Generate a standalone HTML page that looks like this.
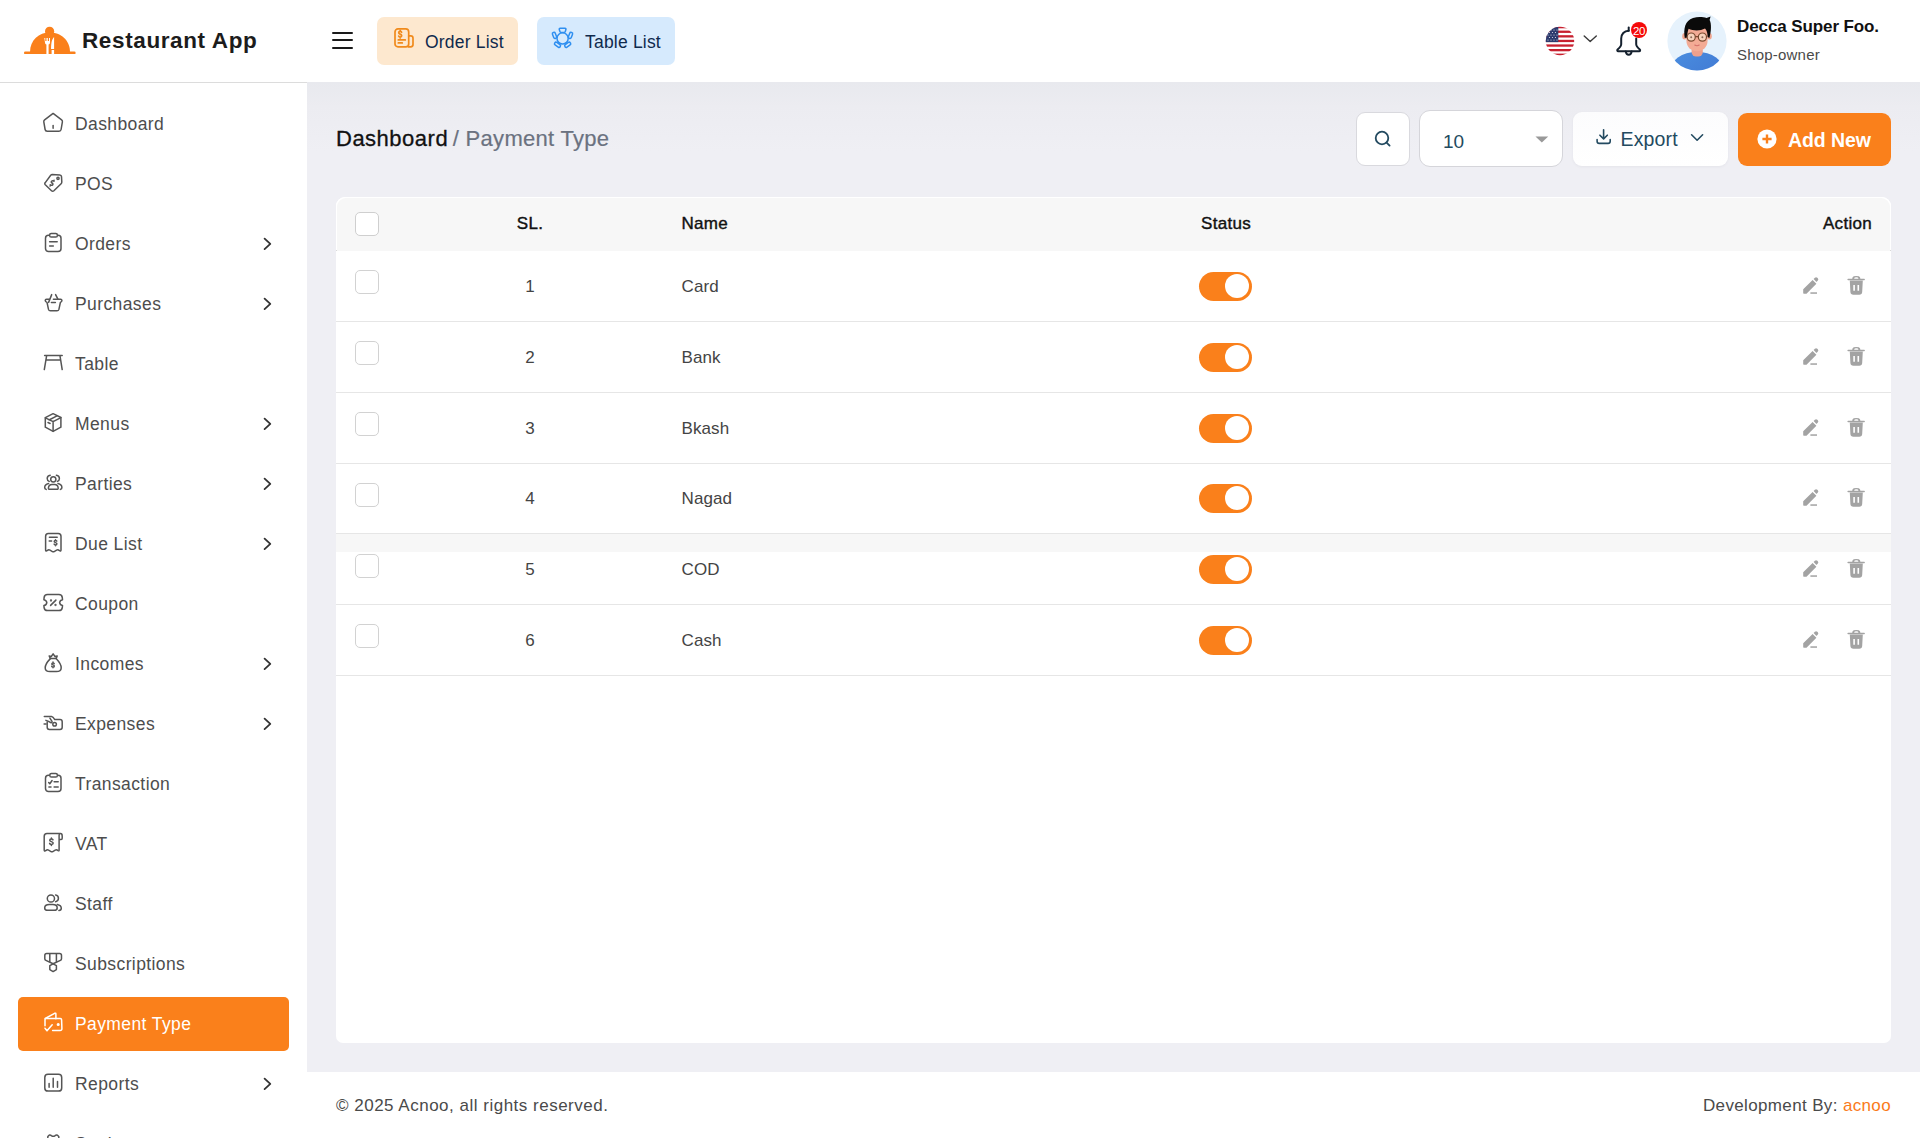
<!DOCTYPE html>
<html><head><meta charset="utf-8"><title>Payment Type</title>
<style>
*{box-sizing:border-box;margin:0;padding:0}
html,body{width:1920px;height:1138px;overflow:hidden;background:#fff;font-family:"Liberation Sans",sans-serif;color:#333}
.abs{position:absolute}
#header{position:absolute;left:0;top:0;width:1920px;height:82px;background:#fff}
#sidebar{position:absolute;left:0;top:82px;width:307px;height:1056px;background:#fff;border-top:1px solid #dcdcdc}
#main{position:absolute;left:307px;top:82px;width:1613px;height:990px;background:linear-gradient(#e8e9ee 0px,#ececf1 25px,#efeff4 70px,#efeff4 100%)}
#footer{position:absolute;left:307px;top:1072px;width:1613px;height:66px;background:#fff}
.nav{position:absolute;left:0;width:307px;height:54px}
.nav .ic{position:absolute;left:40.5px;top:14px;width:24px;height:24px}
.nav .tx{position:absolute;left:75px;top:0;line-height:54px;font-size:17.5px;letter-spacing:.4px;color:#4d4d4d;white-space:nowrap}
.nav .chev{position:absolute;left:262px;top:19px;width:12px;height:16px}
.nav.active{left:18px;width:271px;background:#fa801b;border-radius:5px}
.nav.active .ic{left:22.5px}
.nav.active .tx{left:57px;color:#fff}
svg.i{fill:none;stroke:#555;stroke-width:1.5;stroke-linecap:round;stroke-linejoin:round}
</style></head><body>
<div id="header">
<svg class="abs" style="left:0;top:0" width="100" height="82" viewBox="0 0 100 82">
 <circle cx="49.6" cy="31.3" r="4.6" fill="#fa801b"/>
 <path d="M30 52.3 C30 40 39 32.6 49.8 32.6 C60.6 32.6 70 40 70 52.3 Z" fill="#fa801b"/>
 <rect x="24" y="51.6" width="51.6" height="2.5" rx="1.2" fill="#fa801b"/>
 <path d="M44.3 37.9 h1 v3.2 h1.2 v-3.2 h1.3 v3.2 h1.2 v-3.2 h1 v4.6 c0 1.2 -0.8 1.9 -1.4 2.1 v9.7 h-2.2 v-9.7 c-0.6 -0.2 -1.4 -0.9 -1.4 -2.1 z" fill="#fff"/>
 <path d="M54.1 36.9 v12.1 h-3 c0 -5 0.4 -9.6 3 -12.1 z M51.6 50 h2.5 v4.1 h-2.5 z" fill="#fff"/>
</svg>
<div class="abs" style="left:82px;top:26px;font-size:22.5px;font-weight:700;letter-spacing:.62px;color:#1c1c1c;line-height:30px;white-space:nowrap">Restaurant App</div>
<div class="abs" style="left:332px;top:31.5px;width:21px;height:2px;background:#1a1a1a;border-radius:1px"></div>
<div class="abs" style="left:332px;top:39px;width:21px;height:2px;background:#1a1a1a;border-radius:1px"></div>
<div class="abs" style="left:332px;top:46.5px;width:21px;height:2px;background:#1a1a1a;border-radius:1px"></div>
<div class="abs" style="left:377px;top:17px;width:141px;height:48px;background:#fde8cf;border-radius:7px"></div>
<svg class="abs" style="left:392px;top:26px" width="24" height="24" viewBox="0 0 24 24" fill="none" stroke="#f08a1c" stroke-width="1.7" stroke-linecap="round" stroke-linejoin="round">
 <rect x="3" y="2.9" width="13.7" height="18" rx="3"/>
 <path d="M16.7 9.9 H18.7 Q21 9.9 21 12.2 V18.6 Q21 20.9 18.7 20.9 H16.7"/>
 <path d="M6.3 13.9 H13.3 M6.3 16.9 H10.3"/>
 <path d="M9.6 6.3 C9.4 5.7 8.9 5.4 8.2 5.4 C7.3 5.4 6.7 5.9 6.7 6.7 C6.7 8.3 9.7 7.9 9.7 9.7 C9.7 10.5 9 11 8.2 11 C7.4 11 6.9 10.6 6.7 10 M8.2 4.4 V5.4 M8.2 11 V12"/>
</svg>
<div class="abs" style="left:425px;top:30px;font-size:17.5px;letter-spacing:.2px;color:#0f2a4d;line-height:24px;white-space:nowrap">Order List</div>
<div class="abs" style="left:537px;top:17px;width:138px;height:48px;background:#d6eafd;border-radius:7px"></div>
<svg class="abs" style="left:550px;top:26px" width="25" height="24" viewBox="0 0 25 24" fill="none" stroke="#2f8ff0" stroke-width="1.5" stroke-linecap="round" stroke-linejoin="round">
 <circle cx="12.6" cy="12.4" r="5.6"/>
 <path d="M10.2 2.3 H15 Q16.3 2.3 15.9 3.6 L15.3 5.4 Q15 6.5 13.9 6.6 H11.3 Q10.2 6.5 9.9 5.4 L9.3 3.6 Q8.9 2.3 10.2 2.3 Z"/>
 <rect x="3" y="6.2" width="3" height="6.4" rx="1.4" transform="rotate(-20 4.5 9.4)"/>
 <rect x="19" y="6.2" width="3" height="6.4" rx="1.4" transform="rotate(20 20.5 9.4)"/>
 <rect x="4.2" y="17.3" width="6.6" height="3" rx="1.4" transform="rotate(35 7.5 18.8)"/>
 <rect x="14.4" y="17.3" width="6.6" height="3" rx="1.4" transform="rotate(-35 17.7 18.8)"/>
</svg>
<div class="abs" style="left:585px;top:30px;font-size:17.5px;letter-spacing:.2px;color:#0f2a4d;line-height:24px;white-space:nowrap">Table List</div>
<!-- flag -->
<svg class="abs" style="left:1545px;top:25.5px" width="30" height="30" viewBox="0 0 30 30">
 <defs><clipPath id="fc"><circle cx="15" cy="15" r="14.2"/></clipPath></defs>
 <g clip-path="url(#fc)">
  <rect width="30" height="30" fill="#fff"/>
  <g fill="#c8202f">
   <rect y="0" width="30" height="2.3"/><rect y="4.6" width="30" height="2.3"/><rect y="9.2" width="30" height="2.3"/><rect y="13.8" width="30" height="2.3"/><rect y="18.4" width="30" height="2.3"/><rect y="23" width="30" height="2.3"/><rect y="27.6" width="30" height="2.4"/>
  </g>
  <rect width="13.3" height="16.1" fill="#2c3b6e"/>
  <g fill="#fff" opacity=".85">
   <circle cx="3" cy="4" r=".6"/><circle cx="6" cy="4" r=".6"/><circle cx="9" cy="4" r=".6"/><circle cx="12" cy="4" r=".6"/>
   <circle cx="4.5" cy="6.5" r=".6"/><circle cx="7.5" cy="6.5" r=".6"/><circle cx="10.5" cy="6.5" r=".6"/>
   <circle cx="3" cy="9" r=".6"/><circle cx="6" cy="9" r=".6"/><circle cx="9" cy="9" r=".6"/><circle cx="12" cy="9" r=".6"/>
   <circle cx="4.5" cy="11.5" r=".6"/><circle cx="7.5" cy="11.5" r=".6"/><circle cx="10.5" cy="11.5" r=".6"/>
   <circle cx="3" cy="14" r=".6"/><circle cx="6" cy="14" r=".6"/><circle cx="9" cy="14" r=".6"/><circle cx="12" cy="14" r=".6"/>
  </g>
 </g>
</svg>
<svg class="abs" style="left:1582px;top:33px" width="16" height="10" viewBox="0 0 16 10" fill="none" stroke="#3a3a3a" stroke-width="1.4" stroke-linecap="round" stroke-linejoin="round"><path d="M2.2 3 L8.2 8.6 L14.3 3"/></svg>
<!-- bell -->
<svg class="abs" style="left:1614px;top:24px" width="30" height="34" viewBox="0 0 30 34" fill="none" stroke="#14202e" stroke-width="2" stroke-linecap="round" stroke-linejoin="round">
 <path d="M14.7 3.5 v3.3"/>
 <path d="M14.7 6.8 c-4.5 0 -7.5 3.3 -7.5 7.8 v5.7 c0 1.6 -1 3 -3.6 5.3 c-0.7 0.6 -0.3 1.6 0.6 1.6 h21 c0.9 0 1.3 -1 0.6 -1.6 c-2.6 -2.3 -3.6 -3.7 -3.6 -5.3 v-5.7"/>
 <path d="M11.8 27.6 c0.3 2 1.4 3.2 2.9 3.2 s2.6 -1.2 2.9 -3.2"/>
</svg>
<div class="abs" style="left:1631px;top:22px;width:16px;height:16px;border-radius:50%;background:#f50a0a"></div>
<div class="abs" style="left:1630px;top:22.5px;width:18px;height:16px;font-size:11.5px;line-height:16px;color:#fff;text-align:center;letter-spacing:-.4px">20</div>
<!-- avatar -->
<svg class="abs" style="left:1667px;top:11px" width="60" height="60" viewBox="0 0 60 60">
 <defs><clipPath id="av"><circle cx="30" cy="30" r="29.6"/></clipPath>
 <linearGradient id="shirt" x1="0" y1="0" x2="1" y2="1"><stop offset="0" stop-color="#4a8ee0"/><stop offset="1" stop-color="#3f73cf"/></linearGradient></defs>
 <g clip-path="url(#av)">
  <rect width="60" height="60" fill="#e6f2fc"/>
  <ellipse cx="30" cy="60.5" rx="27" ry="19.8" fill="url(#shirt)"/>
  <rect x="24.6" y="35" width="11.2" height="10.6" rx="4.5" fill="#eea08c"/>
  <ellipse cx="17.6" cy="25.3" rx="2.4" ry="3.2" fill="#f0a690"/>
  <ellipse cx="42.4" cy="25.3" rx="2.4" ry="3.2" fill="#f0a690"/>
  <path d="M19.4 22 C19.4 14 23.5 11.5 30 11.5 C36.5 11.5 40.6 14 40.6 22 V29.5 C40.6 36.3 35.8 40.2 30 40.2 C24.2 40.2 19.4 36.3 19.4 29.5 Z" fill="#f3ab95"/>
  <path d="M17.8 27 C16.2 18 18 9.5 26 7 C31.5 5.4 36.5 6.2 39.5 7 L43.6 5.6 L42.6 9 C44.6 12.5 44.4 20 42.4 27 L40.6 26 C40.6 22 39.8 19.4 38 17.6 C33.2 20.2 26 20 21.6 17.8 C20.6 20.4 20.2 23.4 20.2 26.5 Z" fill="#0a0a0a"/>
  <circle cx="24.2" cy="26.1" r="4.1" fill="#f8dcc6" fill-opacity=".8" stroke="#7b4a30" stroke-width="1.2"/>
  <circle cx="35.4" cy="26.1" r="4.1" fill="#f8dcc6" fill-opacity=".8" stroke="#7b4a30" stroke-width="1.2"/>
  <path d="M28.3 25.6 h2.9" stroke="#7b4a30" stroke-width="1.1"/>
  <circle cx="24.2" cy="26.3" r="1" fill="#8a6a5a"/><circle cx="35.4" cy="26.3" r="1" fill="#8a6a5a"/>
  <path d="M27.8 34 q2.2 1.4 4.4 0" stroke="#d4706a" stroke-width="1.1" fill="none" stroke-linecap="round"/>
 </g>
</svg>
<div class="abs" style="left:1737px;top:16px;font-size:17px;font-weight:700;color:#111;line-height:22px;white-space:nowrap;letter-spacing:-.1px">Decca Super Foo.</div>
<div class="abs" style="left:1737px;top:45px;font-size:15px;color:#4a4a4a;line-height:20px;white-space:nowrap;letter-spacing:.2px">Shop-owner</div>
</div>
<div id="sidebar">
<div class="nav" style="top:14px"><svg class="ic" viewBox="0 0 24 24" fill="none" stroke="#555" stroke-width="1.5" stroke-linecap="round" stroke-linejoin="round"><path d="M12.1 2.4 L20.6 8.8 Q21.6 9.6 21.4 10.8 L20.1 18.5 Q19.8 20.2 18 20.2 H6.2 Q4.4 20.2 4.1 18.5 L2.8 10.8 Q2.6 9.6 3.6 8.8 Z"/><path d="M12.1 14.4 V17.2"/></svg><div class="tx">Dashboard</div></div>
<div class="nav" style="top:74px"><svg class="ic" viewBox="0 0 24 24" fill="none" stroke="#555" stroke-width="1.5" stroke-linecap="round" stroke-linejoin="round"><path d="M11.2 3.6 L18.8 3.9 Q20.4 4 20.5 5.6 L20.8 11 Q20.8 12 20.1 12.7 L12.9 19.7 Q11.7 20.8 10.5 19.7 L4.3 13.8 Q3.2 12.7 4.3 11.6 L9.7 4.2 Q10.3 3.6 11.2 3.6 Z"/><circle cx="17" cy="7.3" r="1.1"/><path d="M13 10.2 C12.3 9.5 11.1 9.6 10.6 10.2 C10 10.8 10.3 11.6 11.1 12 C11.9 12.4 12.2 13.3 11.6 13.9 C11 14.5 9.9 14.5 9.2 13.7 M13.1 9.3 L12.6 9.8 M9.5 14.5 L9 15"/></svg><div class="tx">POS</div></div>
<div class="nav" style="top:134px"><svg class="ic" viewBox="0 0 24 24" fill="none" stroke="#555" stroke-width="1.5" stroke-linecap="round" stroke-linejoin="round"><rect x="4.5" y="4.2" width="15.5" height="16.3" rx="3"/><rect x="8.6" y="2.6" width="7.8" height="3.4" rx="1.6" fill="#fff"/><path d="M8.6 10.8 H16.2 M8.6 15 H12.3"/></svg><div class="tx">Orders</div><svg class="chev" viewBox="0 0 12 16" fill="none" stroke="#333" stroke-width="1.8" stroke-linecap="round" stroke-linejoin="round"><path d="M2.6 2.6 L8.3 7.9 L2.6 13.1"/></svg></div>
<div class="nav" style="top:194px"><svg class="ic" viewBox="0 0 24 24" fill="none" stroke="#555" stroke-width="1.5" stroke-linecap="round" stroke-linejoin="round"><path d="M10.7 3.6 L7.6 11.4 M14.6 3.6 L16.9 8.2"/><path d="M12.4 8.3 H19.6 Q21 8.3 20.9 9.7 Q20.8 10.8 19.4 11.4 L17.9 18.4 Q17.5 19.8 16 19.8 H9.4 Q7.9 19.8 7.5 18.4 L6 11.4 Q4.4 10.8 4.2 9.7 Q4.2 8.3 5.6 8.3 H8.4"/><path d="M10.4 11.6 H14.4"/></svg><div class="tx">Purchases</div><svg class="chev" viewBox="0 0 12 16" fill="none" stroke="#333" stroke-width="1.8" stroke-linecap="round" stroke-linejoin="round"><path d="M2.6 2.6 L8.3 7.9 L2.6 13.1"/></svg></div>
<div class="nav" style="top:254px"><svg class="ic" viewBox="0 0 24 24" fill="none" stroke="#555" stroke-width="1.5" stroke-linecap="round" stroke-linejoin="round"><path d="M3.6 4.5 H21.2 M5.3 9.1 H19.4 M5.6 4.8 L3.3 18.6 M19 4.8 L21.2 18.6"/></svg><div class="tx">Table</div></div>
<div class="nav" style="top:314px"><svg class="ic" viewBox="0 0 24 24" fill="none" stroke="#555" stroke-width="1.5" stroke-linecap="round" stroke-linejoin="round"><path d="M12.1 2.7 L19.9 6.5 V16.2 L12.1 20.4 L4.3 16.2 V6.7 Z"/><path d="M4.4 6.8 L12.1 10.6 L19.9 6.6 M12.1 10.6 V20.3 M8 9 L16 4.9 M7 11.5 L9.1 12.5"/></svg><div class="tx">Menus</div><svg class="chev" viewBox="0 0 12 16" fill="none" stroke="#333" stroke-width="1.8" stroke-linecap="round" stroke-linejoin="round"><path d="M2.6 2.6 L8.3 7.9 L2.6 13.1"/></svg></div>
<div class="nav" style="top:374px"><svg class="ic" viewBox="0 0 24 24" fill="none" stroke="#555" stroke-width="1.5" stroke-linecap="round" stroke-linejoin="round"><circle cx="12.3" cy="8.3" r="2.6"/><path d="M8.6 18.3 Q7.3 18.3 7.4 17 Q7.8 13.6 11 13.6 H13.6 Q16.8 13.6 17.2 17 Q17.3 18.3 16 18.3 Z"/><path d="M9.2 4.3 C7.2 4.7 6.2 6 6.2 7.4 C6.2 8.8 7.1 9.9 8.2 10.4 M15.4 4.3 C17.4 4.7 18.4 6 18.4 7.4 C18.4 8.8 17.5 9.9 16.4 10.4 M7.6 12.4 C5.3 12.9 3.7 14.4 3.7 16.4 C3.7 17.3 4.2 18 5.2 18.4 M17 12.4 C19.3 12.9 20.9 14.4 20.9 16.4 C20.9 17.3 20.4 18 19.4 18.4"/></svg><div class="tx">Parties</div><svg class="chev" viewBox="0 0 12 16" fill="none" stroke="#333" stroke-width="1.8" stroke-linecap="round" stroke-linejoin="round"><path d="M2.6 2.6 L8.3 7.9 L2.6 13.1"/></svg></div>
<div class="nav" style="top:434px"><svg class="ic" viewBox="0 0 24 24" fill="none" stroke="#555" stroke-width="1.5" stroke-linecap="round" stroke-linejoin="round"><path d="M4.6 5.4 Q4.6 2.6 7.4 2.6 H17.2 Q20 2.6 20 5.4 V19 Q20 20.3 19 19.8 L17.4 19 Q16.6 18.6 15.6 19.2 L13.2 20.6 Q12.3 21 11.4 20.6 L9 19.2 Q8 18.6 7.2 19 L5.6 19.8 Q4.6 20.3 4.6 19 Z"/><path d="M8.4 6.3 H16.2 M8.2 9.9 H10.6"/><path d="M15.8 10.2 C15.5 9.6 15 9.4 14.5 9.4 C13.7 9.4 13.2 9.9 13.2 10.5 C13.2 11.9 15.9 11.3 15.9 12.8 C15.9 13.5 15.3 14 14.5 14 C13.9 14 13.3 13.7 13.1 13.1 M14.5 8.7 V9.4 M14.5 14 V14.8"/></svg><div class="tx">Due List</div><svg class="chev" viewBox="0 0 12 16" fill="none" stroke="#333" stroke-width="1.8" stroke-linecap="round" stroke-linejoin="round"><path d="M2.6 2.6 L8.3 7.9 L2.6 13.1"/></svg></div>
<div class="nav" style="top:494px"><svg class="ic" viewBox="0 0 24 24" fill="none" stroke="#555" stroke-width="1.5" stroke-linecap="round" stroke-linejoin="round"><path d="M6.5 3.6 H17.9 Q21 3.6 21.3 6.6 L21.5 8.7 Q19 9.1 18.6 11.6 Q19 14.1 21.5 14.5 L21.3 16.6 Q21 19.6 17.9 19.6 H6.5 Q3.4 19.6 3.1 16.6 L2.9 14.5 Q5.5 14.1 5.8 11.6 Q5.5 9.1 2.9 8.7 L3.1 6.6 Q3.4 3.6 6.5 3.6 Z"/><path d="M9.6 14.4 L14.9 9.1"/><circle cx="10" cy="9.5" r=".4" fill="#555"/><circle cx="14.5" cy="14" r=".4" fill="#555"/></svg><div class="tx">Coupon</div></div>
<div class="nav" style="top:554px"><svg class="ic" viewBox="0 0 24 24" fill="none" stroke="#555" stroke-width="1.5" stroke-linecap="round" stroke-linejoin="round"><path d="M9.4 7.6 L8.2 5 L10.3 5.5 L12.1 2.9 L14 5.5 L16.2 5 L15.1 7.6 Z"/><path d="M9.4 7.6 C6 11 4.1 14 4.2 17 C4.3 19.3 6.2 20.6 9 20.6 H15.4 C18.2 20.6 20.1 19.3 20.2 17 C20.3 14 18.4 11 15.1 7.6"/><path d="M13.2 12.6 C12.9 12.1 12.5 11.9 12 11.9 C11.3 11.9 10.8 12.3 10.8 12.9 C10.8 14.1 13.3 13.6 13.3 14.9 C13.3 15.5 12.7 16 12 16 C11.4 16 10.9 15.7 10.7 15.2 M12 11.1 V11.9 M12 16 V16.8"/></svg><div class="tx">Incomes</div><svg class="chev" viewBox="0 0 12 16" fill="none" stroke="#333" stroke-width="1.8" stroke-linecap="round" stroke-linejoin="round"><path d="M2.6 2.6 L8.3 7.9 L2.6 13.1"/></svg></div>
<div class="nav" style="top:614px"><svg class="ic" viewBox="0 0 24 24" fill="none" stroke="#555" stroke-width="1.5" stroke-linecap="round" stroke-linejoin="round"><path d="M3.3 5.4 H10.6 Q12 5.4 13.8 8.6 H19 Q21.2 8.6 21.2 10.8 V16.2 Q21.2 18.4 19 18.4 H8.4 Q6.2 18.4 6.2 16.2 V11.2"/><circle cx="13.6" cy="13.3" r="1.8"/><path d="M8.9 7.2 L11 10.4 Q11.4 11.6 10.2 11.7 Q9.4 11.7 8.6 10.9 Q7.2 10.4 4.9 9.4 M3.1 13.1 H5.1"/></svg><div class="tx">Expenses</div><svg class="chev" viewBox="0 0 12 16" fill="none" stroke="#333" stroke-width="1.8" stroke-linecap="round" stroke-linejoin="round"><path d="M2.6 2.6 L8.3 7.9 L2.6 13.1"/></svg></div>
<div class="nav" style="top:674px"><svg class="ic" viewBox="0 0 24 24" fill="none" stroke="#555" stroke-width="1.5" stroke-linecap="round" stroke-linejoin="round"><rect x="4.5" y="4.2" width="15.5" height="16.3" rx="3"/><rect x="8.8" y="2.6" width="7.6" height="3.4" rx="1.6" fill="#fff"/><path d="M7.7 11.5 L8.8 12.8 L11.1 9.5 M13.1 10.7 H17.2 M7.9 16 H10 M13.1 16 H17.2"/></svg><div class="tx">Transaction</div></div>
<div class="nav" style="top:734px"><svg class="ic" viewBox="0 0 24 24" fill="none" stroke="#555" stroke-width="1.5" stroke-linecap="round" stroke-linejoin="round"><path d="M19.5 2.6 H6 Q3.2 2.6 3.2 5.4 V19 Q3.2 20.3 4.2 19.8 L5.8 19 Q6.6 18.6 7.6 19.2 L10 20.6 Q10.9 21 11.8 20.6 L14.2 19.2 Q15.2 18.6 16 19 L17.6 19.8 Q18.1 20 18.1 19 V4.2 Q18.1 2.6 19.5 2.6 Q21.2 2.6 21.2 5 V7.3 Q21.2 8.4 20.1 8.4 H18.1"/><path d="M12 8.9 C11.7 8.2 11.1 7.9 10.4 7.9 C9.4 7.9 8.7 8.5 8.7 9.2 C8.7 10.9 12.2 10.3 12.2 12.1 C12.2 12.9 11.4 13.5 10.4 13.5 C9.6 13.5 8.9 13.1 8.6 12.4 M10.4 7 V7.9 M10.4 13.5 V14.4"/></svg><div class="tx">VAT</div></div>
<div class="nav" style="top:794px"><svg class="ic" viewBox="0 0 24 24" fill="none" stroke="#555" stroke-width="1.5" stroke-linecap="round" stroke-linejoin="round"><circle cx="9.9" cy="7.5" r="3.6"/><path d="M6.6 19.3 H13.2 Q16.2 19.3 16.2 16.9 Q16.2 13.6 11.7 13.6 H8.3 Q3.7 13.6 3.7 16.9 Q3.7 19.3 6.6 19.3 Z"/><path d="M14.6 4 A3.4 3.4 0 0 1 14.6 10.7 M16.3 13.4 Q20.3 14.2 20.3 17.2 Q20.3 19.4 17.9 19.4"/></svg><div class="tx">Staff</div></div>
<div class="nav" style="top:854px"><svg class="ic" viewBox="0 0 24 24" fill="none" stroke="#555" stroke-width="1.5" stroke-linecap="round" stroke-linejoin="round"><path d="M5.7 2.6 H18.6 Q20.5 2.6 20.5 4.6 V7.7 Q20.5 8.9 19.4 9.4 L12.1 12.8 L4.9 9.4 Q3.8 8.9 3.8 7.7 V4.6 Q3.8 2.6 5.7 2.6 Z"/><path d="M8.8 2.8 V10.4 M15.4 2.8 V10.4"/><path d="M12.1 12.8 L15.4 14.7 V18.6 L12.1 20.6 L8.8 18.6 V14.7 Z"/></svg><div class="tx">Subscriptions</div></div>
<div class="nav active" style="top:914px"><svg class="ic" viewBox="0 0 24 24" fill="none" stroke="#fff" stroke-width="1.5" stroke-linecap="round" stroke-linejoin="round"><path d="M4.2 7.5 L13.6 2.3 Q14.9 1.7 14.9 3.2 V7.8"/><path d="M4 14.8 V8.4 Q4 7.6 4.8 7.6 H19.3 Q20.5 7.6 20.6 8.8 L20.9 17.5 Q21 19.4 19 19.4 H11.6"/><circle cx="17.2" cy="13.5" r=".8" fill="#fff"/><path d="M4 17.2 L6 19.8 L11.2 13.8"/></svg><div class="tx">Payment Type</div></div>
<div class="nav" style="top:974px"><svg class="ic" viewBox="0 0 24 24" fill="none" stroke="#555" stroke-width="1.5" stroke-linecap="round" stroke-linejoin="round"><rect x="3.8" y="3.3" width="16.9" height="16.8" rx="3.2"/><path d="M8.1 12.4 V16.3 M12.2 7.3 V16.3 M16.5 10.6 V16.3"/></svg><div class="tx">Reports</div><svg class="chev" viewBox="0 0 12 16" fill="none" stroke="#333" stroke-width="1.8" stroke-linecap="round" stroke-linejoin="round"><path d="M2.6 2.6 L8.3 7.9 L2.6 13.1"/></svg></div>
<div class="nav" style="top:1034px"><svg class="ic" viewBox="0 0 24 24" fill="none" stroke="#555" stroke-width="1.5" stroke-linecap="round" stroke-linejoin="round"><path d="M6.8 5.6 Q8.5 2.9 10.4 4.6 Q12.2 6.1 14.1 4.6 Q16 2.9 17.8 5.6 V19 H6.8 Z"/></svg><div class="tx">Settings</div></div>
</div><!--/sidebar-->
<div id="main">
<div class="abs" style="left:29px;top:42.4px;font-size:22px;line-height:30px;letter-spacing:.5px;color:#111;white-space:nowrap;-webkit-text-stroke:.3px #111">Dashboard <span style="color:#6b7280;margin-left:-2px;letter-spacing:.3px;-webkit-text-stroke:.2px #6b7280">/ Payment Type</span></div>
<div class="abs" style="left:1049px;top:30px;width:54px;height:54px;background:#fff;border:1px solid #d9d9de;border-radius:9px"></div>
<svg class="abs" style="left:1065px;top:46px" width="22" height="22" viewBox="0 0 22 22" fill="none" stroke="#234a60" stroke-width="1.8" stroke-linecap="round"><circle cx="10" cy="10" r="6.3"/><path d="M14.6 14.6 L17.6 17.6"/></svg>
<div class="abs" style="left:1112px;top:28px;width:144px;height:57px;background:#fff;border:1px solid #d5d5da;border-radius:11px"></div>
<div class="abs" style="left:1136px;top:46.5px;font-size:19px;line-height:26px;color:#234a60">10</div>
<svg class="abs" style="left:1228px;top:54px" width="14" height="8" viewBox="0 0 14 8"><path d="M0.5 0.5 H13.2 L6.85 6.5 Z" fill="#999"/></svg>
<div class="abs" style="left:1266px;top:30px;width:155px;height:54px;background:linear-gradient(#fcfcfd,#fff);border-radius:9px;box-shadow:0 1px 3px rgba(30,30,60,.05)"></div>
<svg class="abs" style="left:1287px;top:45px" width="20" height="20" viewBox="0 0 20 20" fill="none" stroke="#234a60" stroke-width="1.6" stroke-linecap="round" stroke-linejoin="round"><path d="M9.6 2.8 V11.8 M5.9 8.2 L9.6 11.9 L13.3 8.2 M3.1 12.6 V14.3 Q3.1 16.4 5.2 16.4 H14.1 Q16.2 16.4 16.2 14.3 V12.6"/></svg>
<div class="abs" style="left:1313.5px;top:44px;font-size:19.5px;line-height:26px;letter-spacing:.15px;color:#234a60">Export</div>
<svg class="abs" style="left:1382px;top:49.5px" width="16" height="12" viewBox="0 0 16 12" fill="none" stroke="#234a60" stroke-width="1.6" stroke-linecap="round" stroke-linejoin="round"><path d="M2.6 2.8 L8.1 8.2 L13.6 2.8"/></svg>
<div class="abs" style="left:1431px;top:31px;width:153px;height:53px;background:#fa801b;border-radius:9px"></div>
<svg class="abs" style="left:1449.5px;top:46.5px" width="20" height="20" viewBox="0 0 20 20"><circle cx="10" cy="10" r="9.6" fill="#fff"/><path d="M10 5.4 V14.6 M5.4 10 H14.6" stroke="#fa801b" stroke-width="2.4"/></svg>
<div class="abs" style="left:1481px;top:44.5px;font-size:19.5px;font-weight:700;line-height:26px;letter-spacing:-.1px;color:#fff">Add New</div>
<div class="abs" style="left:29px;top:115px;width:1555px;height:846px;background:#fff;border-radius:9px 9px 7px 7px;overflow:hidden">
 <div class="abs" style="left:0;top:0;width:1555px;height:54px;background:#fff;border-bottom:1px solid #d9d9d9"></div><div class="abs" style="left:1px;top:.5px;width:1553px;height:53.5px;background:#f7f7f7;border-radius:9px 9px 0 0"></div>
 <div class="abs" style="left:19px;top:15px;width:24px;height:24px;background:#fff;border:1px solid #cfcfcf;border-radius:5px"></div>
 <div class="abs" style="left:0;top:15px;width:388px;text-align:center;font-size:17px;font-weight:400;line-height:24px;color:#111;white-space:nowrap;-webkit-text-stroke:.4px #111;letter-spacing:.3px;padding-left:0">SL.</div>
 <div class="abs" style="left:345.5px;top:15px;letter-spacing:.3px;font-size:17px;font-weight:400;line-height:24px;color:#111;white-space:nowrap;-webkit-text-stroke:.4px #111;letter-spacing:.3px">Name</div>
 <div class="abs" style="left:790px;top:15px;width:200px;text-align:center;font-size:17px;font-weight:400;line-height:24px;color:#111;white-space:nowrap;-webkit-text-stroke:.4px #111;letter-spacing:.3px">Status</div>
 <div class="abs" style="right:19px;top:15px;font-size:17px;font-weight:400;line-height:24px;color:#111;white-space:nowrap;-webkit-text-stroke:.4px #111;letter-spacing:.3px">Action</div>
 <div class="abs" style="left:0;top:54px;width:1555px;height:71px;border-bottom:1px solid #e6e6e6">
  <div class="abs" style="left:19px;top:19px;width:24px;height:24px;background:#fff;border:1px solid #d2d2d2;border-radius:5px"></div>
  <div class="abs" style="left:0;top:23.5px;width:388px;text-align:center;font-size:17px;line-height:24px;color:#444;white-space:nowrap;letter-spacing:.1px">1</div>
  <div class="abs" style="left:345.5px;top:23.5px;font-size:17px;line-height:24px;color:#444;white-space:nowrap;letter-spacing:.1px">Card</div>
  <div class="abs" style="left:863px;top:21px;width:53px;height:29px;background:#fa801b;border-radius:15px"></div>
  <div class="abs" style="left:888.8px;top:23px;width:24px;height:24px;background:#fff;border-radius:50%"></div>
  <svg class="abs" style="left:1464px;top:24px" width="20" height="20" viewBox="0 0 20 20"><path d="M3.2 14.3 L12.6 5 L16.4 8.8 L7 18.2 Q6.6 18.7 6 18.7 H3.8 Q3.2 18.7 3.2 18.1 Z" fill="#a3a3a3"/><path d="M13.6 4 L14.9 2.7 Q16.1 1.6 17.3 2.7 L17.8 3.2 Q18.9 4.4 17.8 5.6 L16.5 6.9 Z" fill="#a3a3a3"/><rect x="10.4" y="17.3" width="6.6" height="1.5" fill="#a3a3a3"/></svg>
  <svg class="abs" style="left:1509px;top:24px" width="20" height="20" viewBox="0 0 20 20"><path d="M7.6 2.2 Q8.1 0.9 11.3 0.9 Q14.5 0.9 15 2.2 L15.4 3.7 H19.2 Q19.9 3.8 19.9 4.45 Q19.9 5.1 19.2 5.2 H3.1 Q2.4 5.1 2.4 4.45 Q2.4 3.8 3.1 3.7 H7.2 Z M9.1 3.7 H13.5 Q13.3 2.3 11.3 2.3 Q9.3 2.3 9.1 3.7 Z" fill="#a3a3a3" fill-rule="evenodd"/><path d="M4.8 5.6 H17.8 L17.2 17 Q17 19.8 14.2 19.8 H8.4 Q5.6 19.8 5.4 17 Z M8.3 9.9 V15.8 H9.9 V9.9 Z M12.5 9.9 V15.8 H14.1 V9.9 Z" fill="#a3a3a3" fill-rule="evenodd"/></svg>
 </div>
 <div class="abs" style="left:0;top:125px;width:1555px;height:71px;border-bottom:1px solid #e6e6e6">
  <div class="abs" style="left:19px;top:19px;width:24px;height:24px;background:#fff;border:1px solid #d2d2d2;border-radius:5px"></div>
  <div class="abs" style="left:0;top:23.5px;width:388px;text-align:center;font-size:17px;line-height:24px;color:#444;white-space:nowrap;letter-spacing:.1px">2</div>
  <div class="abs" style="left:345.5px;top:23.5px;font-size:17px;line-height:24px;color:#444;white-space:nowrap;letter-spacing:.1px">Bank</div>
  <div class="abs" style="left:863px;top:21px;width:53px;height:29px;background:#fa801b;border-radius:15px"></div>
  <div class="abs" style="left:888.8px;top:23px;width:24px;height:24px;background:#fff;border-radius:50%"></div>
  <svg class="abs" style="left:1464px;top:24px" width="20" height="20" viewBox="0 0 20 20"><path d="M3.2 14.3 L12.6 5 L16.4 8.8 L7 18.2 Q6.6 18.7 6 18.7 H3.8 Q3.2 18.7 3.2 18.1 Z" fill="#a3a3a3"/><path d="M13.6 4 L14.9 2.7 Q16.1 1.6 17.3 2.7 L17.8 3.2 Q18.9 4.4 17.8 5.6 L16.5 6.9 Z" fill="#a3a3a3"/><rect x="10.4" y="17.3" width="6.6" height="1.5" fill="#a3a3a3"/></svg>
  <svg class="abs" style="left:1509px;top:24px" width="20" height="20" viewBox="0 0 20 20"><path d="M7.6 2.2 Q8.1 0.9 11.3 0.9 Q14.5 0.9 15 2.2 L15.4 3.7 H19.2 Q19.9 3.8 19.9 4.45 Q19.9 5.1 19.2 5.2 H3.1 Q2.4 5.1 2.4 4.45 Q2.4 3.8 3.1 3.7 H7.2 Z M9.1 3.7 H13.5 Q13.3 2.3 11.3 2.3 Q9.3 2.3 9.1 3.7 Z" fill="#a3a3a3" fill-rule="evenodd"/><path d="M4.8 5.6 H17.8 L17.2 17 Q17 19.8 14.2 19.8 H8.4 Q5.6 19.8 5.4 17 Z M8.3 9.9 V15.8 H9.9 V9.9 Z M12.5 9.9 V15.8 H14.1 V9.9 Z" fill="#a3a3a3" fill-rule="evenodd"/></svg>
 </div>
 <div class="abs" style="left:0;top:196px;width:1555px;height:71px;border-bottom:1px solid #e6e6e6">
  <div class="abs" style="left:19px;top:19px;width:24px;height:24px;background:#fff;border:1px solid #d2d2d2;border-radius:5px"></div>
  <div class="abs" style="left:0;top:23.5px;width:388px;text-align:center;font-size:17px;line-height:24px;color:#444;white-space:nowrap;letter-spacing:.1px">3</div>
  <div class="abs" style="left:345.5px;top:23.5px;font-size:17px;line-height:24px;color:#444;white-space:nowrap;letter-spacing:.1px">Bkash</div>
  <div class="abs" style="left:863px;top:21px;width:53px;height:29px;background:#fa801b;border-radius:15px"></div>
  <div class="abs" style="left:888.8px;top:23px;width:24px;height:24px;background:#fff;border-radius:50%"></div>
  <svg class="abs" style="left:1464px;top:24px" width="20" height="20" viewBox="0 0 20 20"><path d="M3.2 14.3 L12.6 5 L16.4 8.8 L7 18.2 Q6.6 18.7 6 18.7 H3.8 Q3.2 18.7 3.2 18.1 Z" fill="#a3a3a3"/><path d="M13.6 4 L14.9 2.7 Q16.1 1.6 17.3 2.7 L17.8 3.2 Q18.9 4.4 17.8 5.6 L16.5 6.9 Z" fill="#a3a3a3"/><rect x="10.4" y="17.3" width="6.6" height="1.5" fill="#a3a3a3"/></svg>
  <svg class="abs" style="left:1509px;top:24px" width="20" height="20" viewBox="0 0 20 20"><path d="M7.6 2.2 Q8.1 0.9 11.3 0.9 Q14.5 0.9 15 2.2 L15.4 3.7 H19.2 Q19.9 3.8 19.9 4.45 Q19.9 5.1 19.2 5.2 H3.1 Q2.4 5.1 2.4 4.45 Q2.4 3.8 3.1 3.7 H7.2 Z M9.1 3.7 H13.5 Q13.3 2.3 11.3 2.3 Q9.3 2.3 9.1 3.7 Z" fill="#a3a3a3" fill-rule="evenodd"/><path d="M4.8 5.6 H17.8 L17.2 17 Q17 19.8 14.2 19.8 H8.4 Q5.6 19.8 5.4 17 Z M8.3 9.9 V15.8 H9.9 V9.9 Z M12.5 9.9 V15.8 H14.1 V9.9 Z" fill="#a3a3a3" fill-rule="evenodd"/></svg>
 </div>
 <div class="abs" style="left:0;top:267px;width:1555px;height:70px;border-bottom:1px solid #e6e6e6">
  <div class="abs" style="left:19px;top:19px;width:24px;height:24px;background:#fff;border:1px solid #d2d2d2;border-radius:5px"></div>
  <div class="abs" style="left:0;top:22.5px;width:388px;text-align:center;font-size:17px;line-height:24px;color:#444;white-space:nowrap;letter-spacing:.1px">4</div>
  <div class="abs" style="left:345.5px;top:22.5px;font-size:17px;line-height:24px;color:#444;white-space:nowrap;letter-spacing:.1px">Nagad</div>
  <div class="abs" style="left:863px;top:20px;width:53px;height:29px;background:#fa801b;border-radius:15px"></div>
  <div class="abs" style="left:888.8px;top:22px;width:24px;height:24px;background:#fff;border-radius:50%"></div>
  <svg class="abs" style="left:1464px;top:23px" width="20" height="20" viewBox="0 0 20 20"><path d="M3.2 14.3 L12.6 5 L16.4 8.8 L7 18.2 Q6.6 18.7 6 18.7 H3.8 Q3.2 18.7 3.2 18.1 Z" fill="#a3a3a3"/><path d="M13.6 4 L14.9 2.7 Q16.1 1.6 17.3 2.7 L17.8 3.2 Q18.9 4.4 17.8 5.6 L16.5 6.9 Z" fill="#a3a3a3"/><rect x="10.4" y="17.3" width="6.6" height="1.5" fill="#a3a3a3"/></svg>
  <svg class="abs" style="left:1509px;top:23px" width="20" height="20" viewBox="0 0 20 20"><path d="M7.6 2.2 Q8.1 0.9 11.3 0.9 Q14.5 0.9 15 2.2 L15.4 3.7 H19.2 Q19.9 3.8 19.9 4.45 Q19.9 5.1 19.2 5.2 H3.1 Q2.4 5.1 2.4 4.45 Q2.4 3.8 3.1 3.7 H7.2 Z M9.1 3.7 H13.5 Q13.3 2.3 11.3 2.3 Q9.3 2.3 9.1 3.7 Z" fill="#a3a3a3" fill-rule="evenodd"/><path d="M4.8 5.6 H17.8 L17.2 17 Q17 19.8 14.2 19.8 H8.4 Q5.6 19.8 5.4 17 Z M8.3 9.9 V15.8 H9.9 V9.9 Z M12.5 9.9 V15.8 H14.1 V9.9 Z" fill="#a3a3a3" fill-rule="evenodd"/></svg>
 </div>
 <div class="abs" style="left:0;top:337px;width:1555px;height:71px;border-bottom:1px solid #e6e6e6">
  <div class="abs" style="left:0;top:0;width:1555px;height:18px;background:#f7f7f7"></div>
  <div class="abs" style="left:19px;top:20px;width:24px;height:24px;background:#fff;border:1px solid #d2d2d2;border-radius:5px"></div>
  <div class="abs" style="left:0;top:23.5px;width:388px;text-align:center;font-size:17px;line-height:24px;color:#444;white-space:nowrap;letter-spacing:.1px">5</div>
  <div class="abs" style="left:345.5px;top:23.5px;font-size:17px;line-height:24px;color:#444;white-space:nowrap;letter-spacing:.1px">COD</div>
  <div class="abs" style="left:863px;top:21px;width:53px;height:29px;background:#fa801b;border-radius:15px"></div>
  <div class="abs" style="left:888.8px;top:23px;width:24px;height:24px;background:#fff;border-radius:50%"></div>
  <svg class="abs" style="left:1464px;top:24px" width="20" height="20" viewBox="0 0 20 20"><path d="M3.2 14.3 L12.6 5 L16.4 8.8 L7 18.2 Q6.6 18.7 6 18.7 H3.8 Q3.2 18.7 3.2 18.1 Z" fill="#a3a3a3"/><path d="M13.6 4 L14.9 2.7 Q16.1 1.6 17.3 2.7 L17.8 3.2 Q18.9 4.4 17.8 5.6 L16.5 6.9 Z" fill="#a3a3a3"/><rect x="10.4" y="17.3" width="6.6" height="1.5" fill="#a3a3a3"/></svg>
  <svg class="abs" style="left:1509px;top:24px" width="20" height="20" viewBox="0 0 20 20"><path d="M7.6 2.2 Q8.1 0.9 11.3 0.9 Q14.5 0.9 15 2.2 L15.4 3.7 H19.2 Q19.9 3.8 19.9 4.45 Q19.9 5.1 19.2 5.2 H3.1 Q2.4 5.1 2.4 4.45 Q2.4 3.8 3.1 3.7 H7.2 Z M9.1 3.7 H13.5 Q13.3 2.3 11.3 2.3 Q9.3 2.3 9.1 3.7 Z" fill="#a3a3a3" fill-rule="evenodd"/><path d="M4.8 5.6 H17.8 L17.2 17 Q17 19.8 14.2 19.8 H8.4 Q5.6 19.8 5.4 17 Z M8.3 9.9 V15.8 H9.9 V9.9 Z M12.5 9.9 V15.8 H14.1 V9.9 Z" fill="#a3a3a3" fill-rule="evenodd"/></svg>
 </div>
 <div class="abs" style="left:0;top:408px;width:1555px;height:71px;border-bottom:1px solid #e6e6e6">
  <div class="abs" style="left:19px;top:19px;width:24px;height:24px;background:#fff;border:1px solid #d2d2d2;border-radius:5px"></div>
  <div class="abs" style="left:0;top:23.5px;width:388px;text-align:center;font-size:17px;line-height:24px;color:#444;white-space:nowrap;letter-spacing:.1px">6</div>
  <div class="abs" style="left:345.5px;top:23.5px;font-size:17px;line-height:24px;color:#444;white-space:nowrap;letter-spacing:.1px">Cash</div>
  <div class="abs" style="left:863px;top:21px;width:53px;height:29px;background:#fa801b;border-radius:15px"></div>
  <div class="abs" style="left:888.8px;top:23px;width:24px;height:24px;background:#fff;border-radius:50%"></div>
  <svg class="abs" style="left:1464px;top:24px" width="20" height="20" viewBox="0 0 20 20"><path d="M3.2 14.3 L12.6 5 L16.4 8.8 L7 18.2 Q6.6 18.7 6 18.7 H3.8 Q3.2 18.7 3.2 18.1 Z" fill="#a3a3a3"/><path d="M13.6 4 L14.9 2.7 Q16.1 1.6 17.3 2.7 L17.8 3.2 Q18.9 4.4 17.8 5.6 L16.5 6.9 Z" fill="#a3a3a3"/><rect x="10.4" y="17.3" width="6.6" height="1.5" fill="#a3a3a3"/></svg>
  <svg class="abs" style="left:1509px;top:24px" width="20" height="20" viewBox="0 0 20 20"><path d="M7.6 2.2 Q8.1 0.9 11.3 0.9 Q14.5 0.9 15 2.2 L15.4 3.7 H19.2 Q19.9 3.8 19.9 4.45 Q19.9 5.1 19.2 5.2 H3.1 Q2.4 5.1 2.4 4.45 Q2.4 3.8 3.1 3.7 H7.2 Z M9.1 3.7 H13.5 Q13.3 2.3 11.3 2.3 Q9.3 2.3 9.1 3.7 Z" fill="#a3a3a3" fill-rule="evenodd"/><path d="M4.8 5.6 H17.8 L17.2 17 Q17 19.8 14.2 19.8 H8.4 Q5.6 19.8 5.4 17 Z M8.3 9.9 V15.8 H9.9 V9.9 Z M12.5 9.9 V15.8 H14.1 V9.9 Z" fill="#a3a3a3" fill-rule="evenodd"/></svg>
 </div>
</div>
</div>
<div id="footer">
<div class="abs" style="left:29px;top:22px;font-size:17px;line-height:24px;letter-spacing:.5px;color:#4a4a4a;white-space:nowrap">© 2025 Acnoo, all rights reserved.</div>
<div class="abs" style="right:29px;top:22px;font-size:17px;line-height:24px;letter-spacing:.36px;color:#4a4a4a;white-space:nowrap">Development By: <span style="color:#fa7a1b">acnoo</span></div>
</div>
</body></html>
